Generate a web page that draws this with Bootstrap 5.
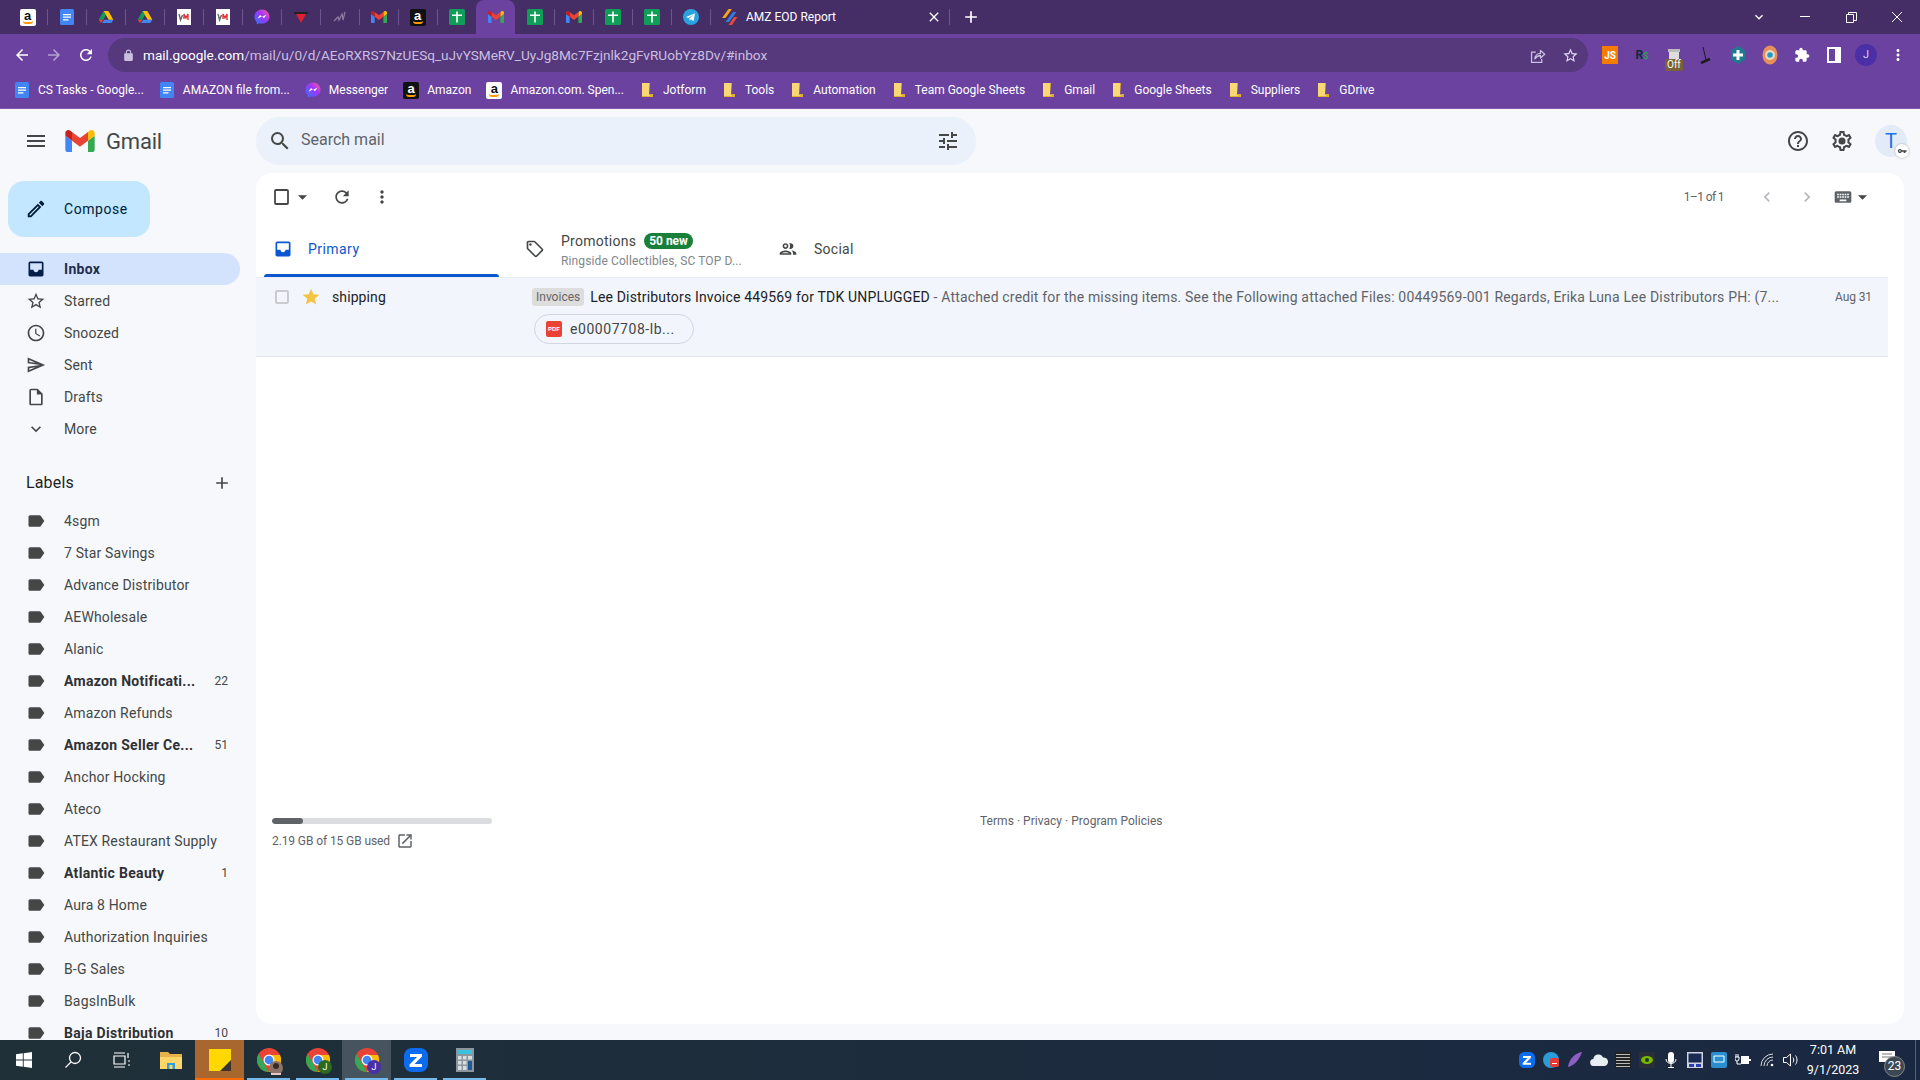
<!DOCTYPE html>
<html lang="en">
<head>
<meta charset="UTF-8">
<title>AMZ EOD Report</title>
<link href="https://cdn.jsdelivr.net/npm/bootstrap@5.3.3/dist/css/bootstrap.min.css" rel="stylesheet">
<style>
html, body { height: 100%; }
body { font-family: Roboto, "Liberation Sans", sans-serif; font-size: 14px; overflow: hidden; background: #f6f8fc; color: #202124; }
svg { display: block; flex-shrink: 0; fill: currentColor; }

/* browser frame */
.tab-strip { height: 34px; background: #452d66; padding-left: 8px; color: #fff; }
.fav-tab { width: 39px; height: 34px; position: relative; }
.fav-tab + .fav-tab::before { content: ""; position: absolute; left: 0; top: 9px; height: 16px; width: 1px; background: #6d5690; }
.fav-tab.is-active { background: #6b429f; border-radius: 8px 8px 0 0; }
.fav-tab.is-active::before, .fav-tab.is-active + .fav-tab::before { display: none; }
.title-tab { width: 240px; height: 34px; padding-left: 12px; font-size: 12px; position: relative; }
.title-tab::before { content: ""; position: absolute; left: 0; top: 9px; height: 16px; width: 1px; background: #6d5690; }
.title-tab::after { content: ""; position: absolute; right: 0; top: 9px; height: 16px; width: 1px; background: #6d5690; }
.title-tab span { margin-left: 8px; }
.new-tab { width: 42px; }
.win-btn { width: 46px; height: 28px; }
.browser-bar { height: 38px; background: #6b429f; color: #fff; padding-top: 4px; padding-left: 6px; }
.nav-btn { width: 32px; }
.omni { width: 1480px; margin-left: 6px; height: 34px; background: #55397c; border-radius: 17px; padding: 0 9px 0 14px; font-size: 13.6px; }
.omni-url { color: #fff; margin-left: 8px; }
.omni-url em { font-style: normal; color: #cbbfe0; }
.ext-slot { width: 32px; }
.ext-js { width: 16px; height: 18px; background: #f57c00; color: #fff; font-size: 10px; font-weight: 700; line-height: 20px; text-align: center; }
.ext-off { position: absolute; left: 7px; bottom: -8px; background: #7a6238; color: #fff; font-size: 10px; line-height: 12px; padding: 0 2px; border-radius: 2px; }
.acct-dot { width: 22px; height: 22px; border-radius: 50%; background: #4a2fa6; color: #d8d0f0; font-size: 11px; line-height: 22px; text-align: center; }
.bookmark-bar { height: 37px; background: #6b429f; padding-left: 14px; gap: 15px; color: #fff; font-size: 12px; border-bottom: 1px solid #7d58ac; }
.bookmark-bar > div { gap: 8px; }
.amazon-a { display: block; width: 16px; height: 17px; border-radius: 2px; font: 700 13px/13px "Liberation Sans", sans-serif; text-align: center; position: relative; }
.amazon-a::after { content: ""; position: absolute; left: 3px; right: 3px; bottom: 2px; height: 3px; border-bottom: 2px solid #f90; border-radius: 0 0 8px 8px; }
.amazon-dark { background: #111; color: #fff; }
.amazon-light { background: #fff; color: #111; }

/* gmail */
.gmail-wrap { min-height: 0; background: #f6f8fc; }
.gmail-side { width: 256px; overflow: hidden; letter-spacing: .15px; }
.gmail-brand { height: 64px; padding-left: 24px; }
.gmail-word { font-size: 22px; color: #444746; margin-left: 11px; letter-spacing: -.2px; }
.compose-btn { width: 142px; height: 56px; margin: 8px 0 16px 8px; background: #c2e7ff; border-radius: 16px; padding-left: 17px; gap: 17px; color: #001d35; font-size: 14px; letter-spacing: .55px; }
.side-row { height: 32px; width: 240px; padding-left: 26px; padding-right: 12px; border-radius: 0 16px 16px 0; color: #444746; }
.side-row svg { margin-right: 18px; }
.side-row.is-current { background: #d3e3fd; color: #1f2d4d; font-weight: 700; letter-spacing: .3px; }
.side-row.is-current svg { color: #041e49; }
.side-row.is-unread { color: #303134; font-weight: 700; letter-spacing: .3px; }
.side-row.is-unread svg { color: #444746; }
.side-count { margin-left: auto; font-size: 12px; font-weight: 400; color: #444746; letter-spacing: 0; }
.labels-head { height: 44px; margin-top: 16px; padding: 0 24px 0 26px; font-size: 16px; color: #1f1f1f; }
.gmail-main { min-width: 0; }
.top-bar { height: 64px; padding-right: 13px; }
.search-box { width: 720px; height: 48px; background: #eaf1fb; border-radius: 24px; padding: 0 16px 0 12px; color: #444746; }
.search-box span { font-size: 16px; margin-left: 9px; color: #5f6368; margin-bottom: 2px; }
.top-btn { width: 44px; color: #444746; }
.avatar-t { width: 32px; height: 32px; margin-left: 11px; border-radius: 50%; background: #e3ebf8; color: #1a73e8; font-size: 20px; line-height: 32px; text-align: center; position: relative; }
.avatar-key { position: absolute; right: -2px; bottom: -1px; width: 14px; height: 14px; border-radius: 50%; background: #fff; color: #444; box-shadow: 0 0 2px #999; padding: 2px; }
.mail-card { height: 851px; width: 1648px; background: #fff; border-radius: 16px; padding-right: 16px; }
.mail-tools { height: 48px; color: #444746; padding-left: 16px; }
.mail-pages { font-size: 12px; color: #5f6368; margin-left: auto; }
.mail-count { letter-spacing: -.6px; }
.tab-row { height: 56px; }
.mail-tab { height: 56px; color: #444746; position: relative; }
.tab-primary { width: 243px; padding-left: 17px; color: #0b57d0; letter-spacing: .45px; }
.tab-primary::after { content: ""; position: absolute; left: 8px; right: 0; bottom: 0; height: 3px; background: #0b57d0; border-radius: 3px 3px 0 0; }
.tab-promo { width: 279px; padding-left: 26px; letter-spacing: .25px; }
.tab-social { padding-left: 0; letter-spacing: .25px; }
.promo-badge { background: #188038; color: #fff; font-size: 12px; font-weight: 700; border-radius: 8px; padding: 0 5px; line-height: 16px; margin-left: 8px; letter-spacing: 0; }
.promo-sub { font-size: 12px; color: #80868b; line-height: 16px; letter-spacing: .12px; margin: 2px 0 -2px; }
.mail-row { height: 80px; background: #f2f6fc; border-top: 1px solid #e9ecf1; border-bottom: 1px solid #e2e6ec; padding: 6px 16px 0 19px; }
.row-check { width: 14px; height: 14px; border: 2px solid #c9cbcf; border-radius: 2px; background: #f2f6fc; margin-top: 6px; }
.row-from { width: 200px; margin-left: 11px; color: #202124; line-height: 20px; margin-top: 3px; letter-spacing: .1px; }
.inv-tag { background: #dddddd; color: #666; font-size: 12px; padding: 0 4px; border-radius: 3px; line-height: 18px; margin-right: 6px; letter-spacing: 0; }
.row-line { height: 26px; white-space: nowrap; overflow: hidden; letter-spacing: .17px; }
.row-subject { color: #202124; }
.row-snip { color: #5f6368; }
.row-date { font-size: 12px; color: #5f6368; margin-left: auto; padding-left: 16px; letter-spacing: -.1px; }
.attach-chip { width: 160px; height: 30px; margin: 4px 0 0 2px; border: 1px solid #cfd6e0; border-radius: 15px; padding-left: 11px; gap: 8px; color: #444746; letter-spacing: .55px; }
.pdf-box { width: 16px; height: 16px; background: #ea4335; color: #fff; font: 700 6px/16px "Liberation Sans", sans-serif; text-align: center; border-radius: 2px; letter-spacing: 0; }
.mail-foot { margin-top: 461px; padding-left: 16px; font-size: 12px; color: #5f6368; }
.quota-wrap { width: 220px; letter-spacing: -.1px; }
.quota-bar { height: 6px; background: #dadce0; border-radius: 3px; overflow: hidden; }
.quota-fill { height: 6px; background: #5f6368; border-radius: 3px; }
.foot-links { margin-left: 488px; margin-top: -6px; letter-spacing: .03px; }

/* taskbar */
.task-bar { height: 40px; background: linear-gradient(to right, #1f3038, #1a2842); color: #fff; }
.task-btn { width: 49px; height: 40px; position: relative; }
.task-btn:first-child { margin-left: -1px; }
.task-btn.is-open::after { content: ""; position: absolute; left: 3px; right: 3px; bottom: 0; height: 2px; background: #76b9ed; }
.task-btn.is-note { background: #a8672f; }
.task-btn.is-note::after { content: ""; position: absolute; left: 0; right: 0; bottom: 0; height: 2px; background: #f76b00; }
.task-btn.is-live { background: #46545f; }
.tray-slot { width: 24px; }
.tray-time { width: 56px; text-align: center; font-size: 12.5px; line-height: 20px; margin-left: 2px; white-space: nowrap; }
.note-wrap { width: 26px; margin-left: 13px; margin-top: -4px; }
.note-badge { position: absolute; left: 10px; bottom: -12px; width: 21px; height: 21px; border-radius: 50%; background: #3b4753; border: 1px solid #888; font-size: 12px; line-height: 19px; text-align: center; }
.task-rule { width: 1px; height: 40px; background: #57636e; margin-left: 15px; margin-right: 4px; }
</style>
</head>
<body class="d-flex flex-column">

<svg width="0" height="0" class="position-absolute">
  <defs>
    <linearGradient id="msgGrad" x1="0" y1="1" x2="1" y2="0"><stop offset="0" stop-color="#2a7bff"/><stop offset=".55" stop-color="#a033ff"/><stop offset="1" stop-color="#ff5c87"/></linearGradient>
    <symbol id="i-gmail" viewBox="52 42 88 66">
      <path fill="#4285f4" d="M58 108h14V74L52 59v43c0 3.32 2.69 6 6 6"/>
      <path fill="#34a853" d="M120 108h14c3.32 0 6-2.69 6-6V59l-20 15"/>
      <path fill="#fbbc04" d="M120 48v26l20-15v-8c0-7.42-8.47-11.65-14.4-7.2"/>
      <path fill="#ea4335" d="M72 74V48l24 18 24-18v26L96 92"/>
      <path fill="#c5221f" d="M52 51v8l20 15V48l-5.6-4.2c-5.94-4.45-14.4-.22-14.4 7.2"/>
    </symbol>
    <symbol id="i-doc" viewBox="0 0 16 16"><rect x="1" width="14" height="16" rx="1.5" fill="#4285f4"/><path fill="#fff" d="M4 5h8v1.2H4zm0 2.6h8v1.2H4zm0 2.6h5.5v1.2H4z"/></symbol>
    <symbol id="i-drive" viewBox="0 0 24 24"><path fill="#0f9d58" d="M1 16 8.500 3l3.500 6-4 7z"/><path fill="#4285f4" d="M6 21l3-5h14l-3 5z"/><path fill="#ffc107" d="M8.500 3h7L23 16h-7z"/><path fill="#ea4335" d="M1 16l3.500 5L8 16z"/></symbol>
    <symbol id="i-wm" viewBox="0 0 16 16"><rect x="1" width="14" height="16" fill="#fff"/><path fill="none" stroke="#666" stroke-width="1.400" d="M3 5l1.600 6L6.500 6"/><path fill="none" stroke="#d33" stroke-width="1.400" d="M8 10V5l2 4 2-4v6"/></symbol>
    <symbol id="i-msg" viewBox="0 0 16 16"><path fill="url(#msgGrad)" d="M8 .5C3.800.5.5 3.600.5 7.700c0 2.100.9 4 2.300 5.200v2.600l2.400-1.300c.9.2 1.800.4 2.800.4 4.200 0 7.500-3.100 7.500-6.900S12.200.5 8 .5z"/><path fill="#fff" d="M3.500 9.800 6 6l2.200 1.800L12.500 5.400 10 9.300 7.800 7.500z"/></symbol>
    <symbol id="i-red" viewBox="0 0 16 16"><path fill="#222" d="M1 3h14v2H1z"/><path fill="#e02030" d="M3 5h10l-5 9z"/></symbol>
    <symbol id="i-dim" viewBox="0 0 16 16"><path fill="none" stroke="#8a7a9c" stroke-width="1.300" d="M2 12 6 8l1 3 3-6 1 6 2-8"/></symbol>
    <symbol id="i-sheet" viewBox="0 0 16 16"><rect x="0" width="16" height="16" rx="1.500" fill="#0f9d58"/><path fill="#fff" d="M7.200 2.500h1.600v3h4.200v1.600H8.800v6.400H7.200V7.100H3V5.500h4.200z"/></symbol>
    <symbol id="i-tele" viewBox="0 0 16 16"><circle cx="8" cy="8" r="8" fill="#29a3e0"/><path fill="#fff" d="M3 8l9-3.800-1.500 8L8 10.300l-1.300 1.500-.3-2.500L11 5.500 5.300 9z"/></symbol>
    <symbol id="i-amz" viewBox="0 0 16 16"><path fill="#f6a21a" d="M6.500 0h3.500L3.500 9H0z"/><path fill="#2f7fe0" d="M11 3h3.500L7 13H3.500z"/><path fill="#e8483a" d="M12 8h3.500L10 16H6.500z"/></symbol>
    <symbol id="i-folder" viewBox="0 0 16 16"><path fill="#f8d775" d="M3 1h7v11l3 3H3z"/><path fill="#e0ae35" d="M10 1h1v11h3v3H3v-1h8z"/></symbol>
    <symbol id="i-share" viewBox="0 0 20 20"><path fill="none" stroke="currentColor" stroke-width="1.500" d="M8 6H3v12h12v-4"/><path fill="none" stroke="currentColor" stroke-width="1.500" stroke-linejoin="round" d="M7 14c0-4 3-6.500 6.500-6.500V4l5 4.500-5 4.500V10c-3 0-5 1.500-6.500 4z"/></symbol>
    <symbol id="i-menu" viewBox="0 0 24 24"><path d="M3 18h18v-2H3v2zm0-5h18v-2H3v2zm0-7v2h18V6H3z"/></symbol>
    <symbol id="i-search" viewBox="0 0 24 24"><path d="M15.500 14h-.79l-.28-.27A6.471 6.471 0 0 0 16 9.500 6.500 6.500 0 1 0 9.500 16c1.610 0 3.090-.59 4.230-1.570l.27.28v.79l5 4.990L20.490 19l-4.990-5zm-6 0C7.010 14 5 11.990 5 9.500S7.010 5 9.500 5 14 7.010 14 9.500 11.990 14 9.500 14z"/></symbol>
    <symbol id="i-tune" viewBox="0 0 24 24"><path d="M3 17v2h6v-2H3zM3 5v2h10V5H3zm10 16v-2h8v-2h-8v-2h-2v6h2zM7 9v2H3v2h4v2h2V9H7zm14 4v-2H11v2h10zm-6-4h2V7h4V5h-4V3h-2v6z"/></symbol>
    <symbol id="i-help" viewBox="0 0 24 24"><path d="M11 18h2v-2h-2v2zm1-16C6.480 2 2 6.480 2 12s4.480 10 10 10 10-4.480 10-10S17.520 2 12 2zm0 18c-4.410 0-8-3.590-8-8s3.590-8 8-8 8 3.590 8 8-3.590 8-8 8zm0-14c-2.210 0-4 1.790-4 4h2c0-1.100.9-2 2-2s2 .9 2 2c0 2-3 1.750-3 5h2c0-2.250 3-2.500 3-5 0-2.210-1.790-4-4-4z"/></symbol>
    <symbol id="i-gear" viewBox="0 0 24 24"><path d="M19.430 12.980c.04-.32.07-.64.07-.98 0-.34-.03-.66-.07-.98l2.110-1.650c.19-.15.24-.42.12-.64l-2-3.460c-.09-.16-.26-.25-.44-.25-.06 0-.12.01-.17.03l-2.490 1c-.52-.4-1.080-.73-1.690-.98l-.38-2.650C14.460 2.180 14.250 2 14 2h-4c-.25 0-.46.18-.49.42l-.38 2.650c-.61.25-1.170.59-1.690.98l-2.490-1c-.06-.02-.12-.03-.18-.03-.17 0-.34.09-.43.25l-2 3.460c-.13.22-.07.49.12.64l2.110 1.650c-.04.32-.07.65-.07.98 0 .33.03.66.07.98l-2.110 1.650c-.19.15-.24.42-.12.64l2 3.460c.09.16.26.25.44.25.06 0 .12-.01.17-.03l2.490-1c.52.4 1.080.73 1.690.98l.38 2.650c.03.24.24.42.49.42h4c.25 0 .46-.18.49-.42l.38-2.650c.61-.25 1.170-.59 1.690-.98l2.490 1c.06.02.12.03.18.03.17 0 .34-.09.43-.25l2-3.460c.12-.22.07-.49-.12-.64l-2.110-1.650zm-1.980-1.710c.04.31.05.52.05.73 0 .21-.02.43-.05.73l-.14 1.130.89.7 1.080.84-.7 1.210-1.270-.51-1.040-.42-.9.68c-.43.32-.84.56-1.250.73l-1.060.43-.16 1.130-.2 1.350h-1.400l-.19-1.350-.16-1.130-1.060-.43c-.43-.18-.83-.41-1.230-.71l-.91-.7-1.060.43-1.270.51-.7-1.210 1.080-.84.89-.7-.14-1.130c-.03-.31-.05-.54-.05-.74s.02-.43.05-.73l.14-1.130-.89-.7-1.080-.84.7-1.210 1.270.51 1.040.42.9-.68c.43-.32.84-.56 1.250-.73l1.060-.43.16-1.130.2-1.350h1.390l.19 1.350.16 1.130 1.060.43c.43.18.83.41 1.230.71l.91.7 1.060-.43 1.270-.51.7 1.210-1.070.85-.89.7.14 1.130z"/><circle cx="12" cy="12" r="3.500"/></symbol>
    <symbol id="i-edit" viewBox="0 0 24 24"><path d="M3 17.250V21h3.750L17.810 9.940l-3.750-3.750L3 17.250zM5.920 19H5v-.92l9.060-9.060.92.92L5.920 19zM20.710 5.630l-2.340-2.340c-.2-.2-.45-.29-.71-.29s-.51.1-.7.29l-1.830 1.830 3.750 3.750 1.830-1.830c.39-.39.39-1.020 0-1.410z"/></symbol>
    <symbol id="i-inbox" viewBox="0 0 24 24"><path fill-rule="evenodd" d="M19 3H5a2 2 0 0 0-2 2v14c0 1.100.9 2 2 2h14c1.100 0 2-.9 2-2V5c0-1.100-.9-2-2-2zM19 13h-4c0 1.660-1.340 3-3 3s-3-1.340-3-3H5V5h14v8z"/></symbol>
    <symbol id="i-star" viewBox="0 0 24 24"><path d="M22 9.240l-7.190-.62L12 2 9.190 8.630 2 9.240l5.460 4.730L5.820 21 12 17.270 18.180 21l-1.630-7.030L22 9.240zM12 15.400l-3.760 2.270 1-4.280-3.320-2.880 4.380-.38L12 6.100l1.710 4.040 4.380.38-3.320 2.880 1 4.280L12 15.400z"/></symbol>
    <symbol id="i-starfill" viewBox="0 0 24 24"><path d="M12 17.270L18.180 21l-1.640-7.030L22 9.240l-7.190-.61L12 2 9.190 8.630 2 9.240l5.460 4.730L5.820 21z"/></symbol>
    <symbol id="i-clock" viewBox="0 0 24 24"><path d="M11.990 2C6.470 2 2 6.480 2 12s4.470 10 9.990 10C17.520 22 22 17.520 22 12S17.520 2 11.990 2zM12 20c-4.420 0-8-3.580-8-8s3.580-8 8-8 8 3.580 8 8-3.580 8-8 8zm.5-13H11v6l5.250 3.150.75-1.230-4.500-2.670z"/></symbol>
    <symbol id="i-send" viewBox="0 0 24 24"><path d="M4.010 6.030l7.510 3.220-7.520-1 .01-2.220m7.500 8.720L4 17.970v-2.220l7.510-1M2.010 3L2 10l15 2-15 2 .01 7L23 12 2.010 3z"/></symbol>
    <symbol id="i-draft" viewBox="0 0 24 24"><path d="M14 2H6c-1.100 0-1.990.9-1.990 2L4 20c0 1.100.89 2 1.990 2H18c1.100 0 2-.9 2-2V8l-6-6zm4 18H6V4h7v5h5v11z"/></symbol>
    <symbol id="i-expand" viewBox="0 0 24 24"><path d="M16.590 8.590L12 13.170 7.410 8.590 6 10l6 6 6-6z"/></symbol>
    <symbol id="i-label" viewBox="0 0 24 24"><path d="M17.630 5.840C17.270 5.330 16.670 5 16 5L5 5.010C3.900 5.010 3 5.900 3 7v10c0 1.100.9 1.990 2 1.990L16 19c.67 0 1.270-.33 1.630-.84L22 12l-4.370-6.160z"/></symbol>
    <symbol id="i-plus" viewBox="0 0 24 24"><path d="M19 13h-6v6h-2v-6H5v-2h6V5h2v6h6v2z"/></symbol>
    <symbol id="i-x" viewBox="0 0 24 24"><path d="M19 6.410 17.590 5 12 10.590 6.410 5 5 6.410 10.590 12 5 17.590 6.410 19 12 13.410 17.590 19 19 17.590 13.410 12z"/></symbol>
    <symbol id="i-refresh" viewBox="0 0 24 24"><path d="M17.650 6.350C16.200 4.900 14.210 4 12 4c-4.420 0-7.990 3.580-7.990 8s3.570 8 7.990 8c3.730 0 6.840-2.550 7.730-6h-2.080c-.82 2.330-3.040 4-5.650 4-3.310 0-6-2.690-6-6s2.690-6 6-6c1.660 0 3.140.69 4.220 1.780L13 11h7V4l-2.350 2.350z"/></symbol>
    <symbol id="i-dots" viewBox="0 0 24 24"><path d="M12 8c1.100 0 2-.9 2-2s-.9-2-2-2-2 .9-2 2 .9 2 2 2zm0 2c-1.100 0-2 .9-2 2s.9 2 2 2 2-.9 2-2-.9-2-2-2zm0 6c-1.100 0-2 .9-2 2s.9 2 2 2 2-.9 2-2-.9-2-2-2z"/></symbol>
    <symbol id="i-left" viewBox="0 0 24 24"><path d="M15.410 7.410L14 6l-6 6 6 6 1.410-1.410L10.830 12z"/></symbol>
    <symbol id="i-right" viewBox="0 0 24 24"><path d="M10 6L8.590 7.410 13.170 12l-4.580 4.590L10 18l6-6z"/></symbol>
    <symbol id="i-keys" viewBox="0 0 24 24"><path d="M20 5H4c-1.100 0-1.990.9-1.990 2L2 17c0 1.100.9 2 2 2h16c1.100 0 2-.9 2-2V7c0-1.100-.9-2-2-2zm-9 3h2v2h-2V8zm0 3h2v2h-2v-2zM8 8h2v2H8V8zm0 3h2v2H8v-2zm-1 2H5v-2h2v2zm0-3H5V8h2v2zm9 7H8v-2h8v2zm0-4h-2v-2h2v2zm0-3h-2V8h2v2zm3 3h-2v-2h2v2zm0-3h-2V8h2v2z"/></symbol>
    <symbol id="i-caret" viewBox="0 0 10 5"><path d="M0 0h10L5 5z"/></symbol>
    <symbol id="i-tag" viewBox="0 0 24 24"><path d="M21.410 11.580l-9-9C12.050 2.220 11.550 2 11 2H4c-1.100 0-2 .9-2 2v7c0 .55.22 1.050.59 1.420l9 9c.36.36.86.58 1.410.58.55 0 1.050-.22 1.410-.59l7-7c.37-.36.59-.86.59-1.410 0-.55-.23-1.060-.59-1.420zM13 20.010L4 11V4h7v-.01l9 9-7 7.020z"/><circle cx="6.500" cy="6.500" r="1.500"/></symbol>
    <symbol id="i-people" viewBox="0 0 24 24"><path d="M9 13.750c-2.340 0-7 1.170-7 3.500V19h14v-1.750c0-2.330-4.660-3.500-7-3.500zM4.340 17c.84-.58 2.870-1.250 4.660-1.250s3.820.67 4.660 1.250H4.340zM9 12c1.930 0 3.500-1.570 3.500-3.500S10.930 5 9 5 5.500 6.570 5.500 8.500 7.070 12 9 12zm0-5c.83 0 1.500.67 1.500 1.500S9.830 10 9 10s-1.500-.67-1.500-1.500S8.170 7 9 7zm7.040 6.810c1.160.84 1.960 1.960 1.960 3.440V19h4v-1.750c0-2.020-3.500-3.170-5.960-3.440zM15 12c1.930 0 3.500-1.570 3.500-3.500S16.930 5 15 5c-.54 0-1.040.13-1.500.35.63.89 1 1.980 1 3.150s-.37 2.260-1 3.150c.46.22.96.35 1.500.35z"/></symbol>
    <symbol id="i-open" viewBox="0 0 24 24"><path d="M19 19H5V5h7V3H5c-1.110 0-2 .9-2 2v14c0 1.100.89 2 2 2h14c1.100 0 2-.9 2-2v-7h-2v7zM14 3v2h3.590l-9.830 9.830 1.410 1.410L19 6.410V10h2V3h-7z"/></symbol>
    <symbol id="i-back" viewBox="0 0 24 24"><path d="M20 11H7.830l5.590-5.590L12 4l-8 8 8 8 1.410-1.410L7.830 13H20v-2z"/></symbol>
    <symbol id="i-fwd" viewBox="0 0 24 24"><path d="M12 4l-1.410 1.410L16.170 11H4v2h12.170l-5.580 5.590L12 20l8-8z"/></symbol>
    <symbol id="i-lock" viewBox="0 0 24 24"><path d="M18 8h-1V6c0-2.760-2.240-5-5-5S7 3.240 7 6v2H6c-1.100 0-2 .9-2 2v10c0 1.100.9 2 2 2h12c1.100 0 2-.9 2-2V10c0-1.100-.9-2-2-2zM9 6c0-1.660 1.340-3 3-3s3 1.340 3 3v2H9V6z"/></symbol>
    <symbol id="i-puzzle" viewBox="0 0 24 24"><path d="M20.500 11H19V7c0-1.100-.9-2-2-2h-4V3.500C13 2.120 11.880 1 10.500 1S8 2.120 8 3.500V5H4c-1.100 0-1.990.9-1.990 2v3.800H3.500c1.490 0 2.700 1.210 2.700 2.700s-1.210 2.700-2.700 2.700H2V20c0 1.100.9 2 2 2h3.800v-1.500c0-1.490 1.210-2.700 2.700-2.700 1.490 0 2.700 1.210 2.700 2.700V22H17c1.100 0 2-.9 2-2v-4h1.500c1.380 0 2.500-1.120 2.500-2.500S21.880 11 20.500 11z"/></symbol>
    <symbol id="i-chrome" viewBox="0 0 24 24"><circle cx="12" cy="12" r="12" fill="#ea4335"/><path fill="#fbbc04" d="M12 7h11a12 12 0 0 1-11 17l5-9z"/><path fill="#34a853" d="M1.600 6 7 15l5 9A12 12 0 0 1 1.600 6z"/><circle cx="12" cy="12" r="5.500" fill="#fff"/><circle cx="12" cy="12" r="4.300" fill="#4285f4"/></symbol>
    <symbol id="i-zoomz" viewBox="0 0 24 24"><rect width="24" height="24" rx="8" fill="#0b6cf0"/><path fill="#fff" d="M6 6h12v2.500L10.500 16H18v3H5.500v-2.500L13 9H6z"/></symbol>
    <symbol id="i-win" viewBox="0 0 16 16"><path fill="#fff" d="M0 2.300 6.800 1.300v6.200H0zM7.700 1.200 16 0v7.500H7.700zM0 8.400h6.800v6.300L0 13.700zM7.700 8.400H16V16l-8.300-1.200z"/></symbol>
  </defs>
</svg>

<!-- tab strip -->
<div class="tab-strip d-flex align-items-center flex-shrink-0">
  <div class="fav-tab d-flex align-items-center justify-content-center"><span class="amazon-a amazon-light">a</span></div>
  <div class="fav-tab d-flex align-items-center justify-content-center"><svg width="16" height="16"><use href="#i-doc"/></svg></div>
  <div class="fav-tab d-flex align-items-center justify-content-center"><svg width="16" height="16"><use href="#i-drive"/></svg></div>
  <div class="fav-tab d-flex align-items-center justify-content-center"><svg width="16" height="16"><use href="#i-drive"/></svg></div>
  <div class="fav-tab d-flex align-items-center justify-content-center"><svg width="16" height="16"><use href="#i-wm"/></svg></div>
  <div class="fav-tab d-flex align-items-center justify-content-center"><svg width="16" height="16"><use href="#i-wm"/></svg></div>
  <div class="fav-tab d-flex align-items-center justify-content-center"><svg width="16" height="16"><use href="#i-msg"/></svg></div>
  <div class="fav-tab d-flex align-items-center justify-content-center"><svg width="16" height="16"><use href="#i-red"/></svg></div>
  <div class="fav-tab d-flex align-items-center justify-content-center"><svg width="16" height="16"><use href="#i-dim"/></svg></div>
  <div class="fav-tab d-flex align-items-center justify-content-center"><svg width="16" height="12"><use href="#i-gmail"/></svg></div>
  <div class="fav-tab d-flex align-items-center justify-content-center"><span class="amazon-a amazon-dark">a</span></div>
  <div class="fav-tab d-flex align-items-center justify-content-center"><svg width="16" height="16"><use href="#i-sheet"/></svg></div>
  <div class="fav-tab is-active d-flex align-items-center justify-content-center"><svg width="16" height="12"><use href="#i-gmail"/></svg></div>
  <div class="fav-tab d-flex align-items-center justify-content-center"><svg width="16" height="16"><use href="#i-sheet"/></svg></div>
  <div class="fav-tab d-flex align-items-center justify-content-center"><svg width="16" height="12"><use href="#i-gmail"/></svg></div>
  <div class="fav-tab d-flex align-items-center justify-content-center"><svg width="16" height="16"><use href="#i-sheet"/></svg></div>
  <div class="fav-tab d-flex align-items-center justify-content-center"><svg width="16" height="16"><use href="#i-sheet"/></svg></div>
  <div class="fav-tab d-flex align-items-center justify-content-center"><svg width="16" height="16"><use href="#i-tele"/></svg></div>
  <div class="title-tab d-flex align-items-center">
    <svg width="16" height="16"><use href="#i-amz"/></svg><span>AMZ EOD Report</span>
    <svg class="ms-auto me-2" width="16" height="16"><use href="#i-x"/></svg>
  </div>
  <div class="new-tab d-flex justify-content-center"><svg width="20" height="20"><use href="#i-plus"/></svg></div>
  <div class="ms-auto d-flex align-items-center">
    <div class="win-btn d-flex align-items-center justify-content-center"><svg width="16" height="16"><use href="#i-expand"/></svg></div>
    <div class="win-btn d-flex align-items-center justify-content-center"><svg width="10" height="2"><rect width="10" height="1" fill="#fff"/></svg></div>
    <div class="win-btn d-flex align-items-center justify-content-center"><svg width="11" height="11" viewBox="0 0 11 11"><path fill="none" stroke="#fff" d="M.5 2.500h7v8h-7zM2.500 2.500v-2h8v8h-3"/></svg></div>
    <div class="win-btn d-flex align-items-center justify-content-center"><svg width="12" height="12" viewBox="0 0 12 12"><path stroke="#fff" d="M1 1l10 10M11 1 1 11"/></svg></div>
  </div>
</div>

<!-- address bar -->
<div class="browser-bar d-flex align-items-center flex-shrink-0">
  <div class="nav-btn d-flex justify-content-center"><svg width="18" height="18"><use href="#i-back"/></svg></div>
  <div class="nav-btn d-flex justify-content-center" style="opacity:.5"><svg width="18" height="18"><use href="#i-fwd"/></svg></div>
  <div class="nav-btn d-flex justify-content-center"><svg width="18" height="18"><use href="#i-refresh"/></svg></div>
  <div class="omni d-flex align-items-center">
    <svg width="13" height="13" style="color:#cbbfe0"><use href="#i-lock"/></svg>
    <span class="omni-url">mail.google.com<em>/mail/u/0/d/AEoRXRS7NzUESq_uJvYSMeRV_UyJg8Mc7Fzjnlk2gFvRUobYz8Dv/#inbox</em></span>
    <svg class="ms-auto" width="17" height="17" style="color:#cbbfe0"><use href="#i-share"/></svg>
    <svg class="ms-3" width="17" height="17" style="color:#e3dcf0"><use href="#i-star"/></svg>
  </div>
  <div class="d-flex align-items-center ms-2" style="margin-left:6px!important">
    <div class="ext-slot d-flex justify-content-center"><div class="ext-js">JS</div></div>
    <div class="ext-slot d-flex justify-content-center"><span style="color:#12283a;font-size:12px;font-weight:700">R<span style="color:#2e9e5b;font-size:9px">$</span></span></div>
    <div class="ext-slot d-flex justify-content-center position-relative"><svg width="14" height="16" viewBox="0 0 14 16"><path fill="#bbb" d="M1 2h12v3H1z"/><path fill="#ddd" d="M2 5h10v9H2z"/></svg><span class="ext-off">Off</span></div>
    <div class="ext-slot d-flex justify-content-center"><svg width="12" height="18" viewBox="0 0 12 18"><path stroke="#1c1c1c" fill="none" d="M3 1l3 13"/><path stroke="#1c1c1c" stroke-width="2.500" d="M1 17l9-4"/></svg></div>
    <div class="ext-slot d-flex justify-content-center"><svg width="16" height="18" viewBox="0 0 16 18"><path fill="#1e7a90" d="M8 0l7 4.500v9L8 18l-7-4.500v-9z"/><path fill="#fff" d="M6.500 4h3v3.500H13v3H9.500V14h-3v-3.500H3v-3h3.500z"/></svg></div>
    <div class="ext-slot d-flex justify-content-center"><svg width="16" height="20" viewBox="0 0 16 20"><ellipse cx="8" cy="10" rx="7.500" ry="9.500" fill="#e8905a"/><circle cx="8" cy="10" r="5" fill="#e6d8c8"/><circle cx="8" cy="10" r="2.800" fill="#1e9bc8"/></svg></div>
    <div class="ext-slot d-flex justify-content-center"><svg width="16" height="18"><use href="#i-puzzle"/></svg></div>
    <div class="ext-slot d-flex justify-content-center"><svg width="14" height="16" viewBox="0 0 14 16"><path fill="#fff" fill-rule="evenodd" d="M0 0h14v16H0zM2 2v12h6V2z"/></svg></div>
    <div class="ext-slot d-flex justify-content-center"><div class="acct-dot">J</div></div>
    <div class="ext-slot d-flex justify-content-center"><svg width="18" height="18"><use href="#i-dots"/></svg></div>
  </div>
</div>

<!-- bookmarks -->
<div class="bookmark-bar d-flex align-items-center flex-shrink-0">
  <div class="d-flex align-items-center"><svg width="16" height="16"><use href="#i-doc"/></svg><span>CS Tasks - Google...</span></div>
  <div class="d-flex align-items-center"><svg width="16" height="16"><use href="#i-doc"/></svg><span>AMAZON file from...</span></div>
  <div class="d-flex align-items-center"><svg width="16" height="16"><use href="#i-msg"/></svg><span>Messenger</span></div>
  <div class="d-flex align-items-center"><span class="amazon-a amazon-dark">a</span><span>Amazon</span></div>
  <div class="d-flex align-items-center"><span class="amazon-a amazon-light">a</span><span>Amazon.com. Spen...</span></div>
  <div class="d-flex align-items-center"><svg width="16" height="16"><use href="#i-folder"/></svg><span>Jotform</span></div>
  <div class="d-flex align-items-center"><svg width="16" height="16"><use href="#i-folder"/></svg><span>Tools</span></div>
  <div class="d-flex align-items-center"><svg width="16" height="16"><use href="#i-folder"/></svg><span>Automation</span></div>
  <div class="d-flex align-items-center"><svg width="16" height="16"><use href="#i-folder"/></svg><span>Team Google Sheets</span></div>
  <div class="d-flex align-items-center"><svg width="16" height="16"><use href="#i-folder"/></svg><span>Gmail</span></div>
  <div class="d-flex align-items-center"><svg width="16" height="16"><use href="#i-folder"/></svg><span>Google Sheets</span></div>
  <div class="d-flex align-items-center"><svg width="16" height="16"><use href="#i-folder"/></svg><span>Suppliers</span></div>
  <div class="d-flex align-items-center"><svg width="16" height="16"><use href="#i-folder"/></svg><span>GDrive</span></div>
</div>

<!-- gmail -->
<div class="gmail-wrap d-flex flex-grow-1">
  <aside class="gmail-side flex-shrink-0">
    <div class="gmail-brand d-flex align-items-center">
      <svg width="24" height="24" style="color:#444746"><use href="#i-menu"/></svg>
      <svg width="30" height="22" style="margin-left:17px"><use href="#i-gmail"/></svg>
      <span class="gmail-word">Gmail</span>
    </div>
    <div class="compose-btn d-flex align-items-center"><svg width="22" height="22" style="color:#001d35"><use href="#i-edit"/></svg><span>Compose</span></div>
    <div class="side-row is-current d-flex align-items-center"><svg width="20" height="20"><use href="#i-inbox"/></svg>Inbox</div>
    <div class="side-row d-flex align-items-center"><svg width="20" height="20"><use href="#i-star"/></svg>Starred</div>
    <div class="side-row d-flex align-items-center"><svg width="20" height="20"><use href="#i-clock"/></svg>Snoozed</div>
    <div class="side-row d-flex align-items-center"><svg width="20" height="20"><use href="#i-send"/></svg>Sent</div>
    <div class="side-row d-flex align-items-center"><svg width="20" height="20"><use href="#i-draft"/></svg>Drafts</div>
    <div class="side-row d-flex align-items-center"><svg width="20" height="20"><use href="#i-expand"/></svg>More</div>
    <div class="labels-head d-flex align-items-center justify-content-between">Labels<svg width="20" height="20" style="color:#444746"><use href="#i-plus"/></svg></div>
    <div class="side-row d-flex align-items-center"><svg width="20" height="20"><use href="#i-label"/></svg>4sgm</div>
    <div class="side-row d-flex align-items-center"><svg width="20" height="20"><use href="#i-label"/></svg>7 Star Savings</div>
    <div class="side-row d-flex align-items-center"><svg width="20" height="20"><use href="#i-label"/></svg>Advance Distributor</div>
    <div class="side-row d-flex align-items-center"><svg width="20" height="20"><use href="#i-label"/></svg>AEWholesale</div>
    <div class="side-row d-flex align-items-center"><svg width="20" height="20"><use href="#i-label"/></svg>Alanic</div>
    <div class="side-row is-unread d-flex align-items-center"><svg width="20" height="20"><use href="#i-label"/></svg>Amazon Notificati...<span class="side-count">22</span></div>
    <div class="side-row d-flex align-items-center"><svg width="20" height="20"><use href="#i-label"/></svg>Amazon Refunds</div>
    <div class="side-row is-unread d-flex align-items-center"><svg width="20" height="20"><use href="#i-label"/></svg>Amazon Seller Ce...<span class="side-count">51</span></div>
    <div class="side-row d-flex align-items-center"><svg width="20" height="20"><use href="#i-label"/></svg>Anchor Hocking</div>
    <div class="side-row d-flex align-items-center"><svg width="20" height="20"><use href="#i-label"/></svg>Ateco</div>
    <div class="side-row d-flex align-items-center"><svg width="20" height="20"><use href="#i-label"/></svg>ATEX Restaurant Supply</div>
    <div class="side-row is-unread d-flex align-items-center"><svg width="20" height="20"><use href="#i-label"/></svg>Atlantic Beauty<span class="side-count">1</span></div>
    <div class="side-row d-flex align-items-center"><svg width="20" height="20"><use href="#i-label"/></svg>Aura 8 Home</div>
    <div class="side-row d-flex align-items-center"><svg width="20" height="20"><use href="#i-label"/></svg>Authorization Inquiries</div>
    <div class="side-row d-flex align-items-center"><svg width="20" height="20"><use href="#i-label"/></svg>B-G Sales</div>
    <div class="side-row d-flex align-items-center"><svg width="20" height="20"><use href="#i-label"/></svg>BagsInBulk</div>
    <div class="side-row is-unread d-flex align-items-center"><svg width="20" height="20"><use href="#i-label"/></svg>Baja Distribution<span class="side-count">10</span></div>
  </aside>

  <main class="gmail-main flex-grow-1">
    <div class="top-bar d-flex align-items-center">
      <div class="search-box d-flex align-items-center">
        <svg width="24" height="24"><use href="#i-search"/></svg>
        <span>Search mail</span>
        <svg class="ms-auto" width="24" height="24"><use href="#i-tune"/></svg>
      </div>
      <div class="ms-auto d-flex align-items-center">
        <div class="top-btn d-flex justify-content-center"><svg width="24" height="24"><use href="#i-help"/></svg></div>
        <div class="top-btn d-flex justify-content-center"><svg width="24" height="24"><use href="#i-gear"/></svg></div>
        <div class="avatar-t">T<span class="avatar-key"><svg width="10" height="10" viewBox="0 0 24 24"><path d="M7 7a5 5 0 1 0 4.600 7H16v3h4v-3h3v-4H11.600A5 5 0 0 0 7 7zm0 3a2 2 0 1 1 0 4 2 2 0 0 1 0-4z"/></svg></span></div>
      </div>
    </div>

    <div class="mail-card">
      <div class="mail-tools d-flex align-items-center">
        <svg width="18" height="18" viewBox="0 0 18 18"><rect x="3" y="2" width="13" height="14" rx="1" fill="none" stroke="#444746" stroke-width="1.800"/></svg>
        <svg class="ms-2" width="9" height="5"><use href="#i-caret"/></svg>
        <svg width="20" height="20" style="margin-left:25px"><use href="#i-refresh"/></svg>
        <svg width="20" height="20" style="margin-left:20px"><use href="#i-dots"/></svg>
        <div class="mail-pages d-flex align-items-center">
          <span class="mail-count">1–1 of 1</span>
          <svg width="20" height="20" style="margin-left:33px;color:#b4b7bb"><use href="#i-left"/></svg>
          <svg width="20" height="20" style="margin-left:20px;color:#b4b7bb"><use href="#i-right"/></svg>
          <svg width="20" height="20" style="margin-left:16px;color:#5f6368"><use href="#i-keys"/></svg>
          <svg width="9" height="5" style="margin-left:5px;margin-right:21px;color:#444746"><use href="#i-caret"/></svg>
        </div>
      </div>

      <div class="tab-row d-flex">
        <div class="mail-tab tab-primary d-flex align-items-center"><svg width="20" height="20"><use href="#i-inbox"/></svg><span style="margin-left:15px">Primary</span></div>
        <div class="mail-tab tab-promo d-flex align-items-center">
          <svg width="20" height="20"><use href="#i-tag"/></svg>
          <div style="margin-left:16px">
            <div class="d-flex align-items-center" style="line-height:20px">Promotions<span class="promo-badge">50 new</span></div>
            <div class="promo-sub">Ringside Collectibles, SC TOP D...</div>
          </div>
        </div>
        <div class="mail-tab tab-social d-flex align-items-center"><svg width="20" height="20"><use href="#i-people"/></svg><span style="margin-left:16px">Social</span></div>
      </div>

      <div class="mail-row">
        <div class="d-flex align-items-start">
          <div class="row-check flex-shrink-0"></div>
          <svg width="20" height="20" style="margin:3px 0 0 12px;color:#f4c542"><use href="#i-starfill"/></svg>
          <div class="row-from flex-shrink-0">shipping</div>
          <div class="flex-grow-1" style="min-width:0">
            <div class="row-line d-flex align-items-center">
              <span class="inv-tag">Invoices</span>
              <span class="row-subject">Lee Distributors Invoice 449569 for TDK UNPLUGGED</span>
              <span class="row-snip">&nbsp;- Attached credit for the missing items. See the Following attached Files: 00449569-001 Regards, Erika Luna Lee Distributors PH: (7...</span>
              <span class="row-date">Aug 31</span>
            </div>
            <div class="attach-chip d-flex align-items-center"><span class="pdf-box">PDF</span><span>e00007708-lb...</span></div>
          </div>
        </div>
      </div>

      <div class="mail-foot d-flex">
        <div class="quota-wrap">
          <div class="quota-bar"><div class="quota-fill" style="width:14%"></div></div>
          <div class="d-flex align-items-center mt-2">2.19 GB of 15 GB used<svg style="margin-left:6px" width="18" height="18"><use href="#i-open"/></svg></div>
        </div>
        <div class="foot-links">Terms · Privacy · Program Policies</div>
      </div>
    </div>
  </main>
</div>

<!-- taskbar -->
<div class="task-bar d-flex align-items-center flex-shrink-0">
  <div class="task-btn d-flex align-items-center justify-content-center"><svg width="16" height="16"><use href="#i-win"/></svg></div>
  <div class="task-btn d-flex align-items-center justify-content-center"><svg width="18" height="18" viewBox="0 0 18 18"><circle cx="11" cy="7" r="5.500" fill="none" stroke="#fff" stroke-width="1.300"/><path stroke="#fff" stroke-width="1.300" d="M7 11l-5.500 5.500"/></svg></div>
  <div class="task-btn d-flex align-items-center justify-content-center"><svg width="18" height="16" viewBox="0 0 18 16"><path fill="none" stroke="#fff" stroke-width="1.200" d="M1 4h11v8H1zM1 1h11M1 15h11M15 1v5M15 9h2M15 13h2"/></svg></div>
  <div class="task-btn d-flex align-items-center justify-content-center"><svg width="22" height="18" viewBox="0 0 22 18"><path fill="#e8b14a" d="M0 1h8l2 2h12v15H0z"/><path fill="#ffd667" d="M0 6h22v12H0z"/><path fill="#2d9fe0" d="M7 12h8v6H7z"/><path fill="#ffd667" d="M9.500 14h3v4h-3z"/></svg></div>
  <div class="task-btn is-note d-flex align-items-center justify-content-center"><svg width="22" height="22" viewBox="0 0 22 22"><path fill="#ffd800" d="M0 0h22v16l-6 6H0z"/><path fill="#3a3430" d="M11 22l11-11v11z"/></svg></div>
  <div class="task-btn is-open d-flex align-items-center justify-content-center position-relative"><svg width="24" height="24"><use href="#i-chrome"/></svg><svg class="position-absolute" style="right:10px;bottom:5px" width="14" height="14" viewBox="0 0 14 14"><circle cx="7" cy="7" r="7" fill="#8d7468"/><circle cx="7" cy="5" r="3" fill="#3a2a24"/><path fill="#e8c8c0" d="M2 12h10v2H2z"/></svg></div>
  <div class="task-btn is-open d-flex align-items-center justify-content-center position-relative"><svg width="24" height="24"><use href="#i-chrome"/></svg><span class="position-absolute text-center" style="right:10px;bottom:6px;width:14px;height:14px;border-radius:50%;background:#2d6a1f;font-size:9px;line-height:14px">J</span></div>
  <div class="task-btn is-open is-live d-flex align-items-center justify-content-center position-relative"><svg width="24" height="24"><use href="#i-chrome"/></svg><span class="position-absolute text-center" style="right:10px;bottom:6px;width:14px;height:14px;border-radius:50%;background:#4a2fa6;font-size:9px;line-height:14px">J</span></div>
  <div class="task-btn is-open d-flex align-items-center justify-content-center"><svg width="24" height="24"><use href="#i-zoomz"/></svg></div>
  <div class="task-btn is-open d-flex align-items-center justify-content-center"><svg width="18" height="24" viewBox="0 0 18 24"><rect width="18" height="24" fill="#8b969e"/><path fill="#3cc2dc" d="M2 2h14v4H2z"/><path fill="#d8dde0" d="M2 8h3.500v3.500H2zm5 0h3.500v3.500H7zm5 0h4v3.500h-4zM2 13h3.500v3.500H2zm5 0h3.500v3.500H7zM2 18h3.500v4H2zm5 0h3.500v4H7z"/><path fill="#1e5b94" d="M12 13h4v9h-4z"/></svg></div>

  <div class="ms-auto d-flex align-items-center">
    <div class="tray-slot d-flex justify-content-center"><svg width="16" height="16"><use href="#i-zoomz"/></svg></div>
    <div class="tray-slot d-flex justify-content-center position-relative"><svg width="16" height="16" viewBox="0 0 16 16"><circle cx="8" cy="8" r="8" fill="#2a9cd8"/><rect x="7" y="6" width="9" height="9" rx="2" fill="#e53935"/><rect x="9" y="11" width="5" height="1" fill="#fff"/></svg></div>
    <div class="tray-slot d-flex justify-content-center"><svg width="16" height="16" viewBox="0 0 16 16"><path fill="#8e5fc2" d="M15 0C8 1 2 7 1 15c5-1 11-6 14-15z"/></svg></div>
    <div class="tray-slot d-flex justify-content-center"><svg width="18" height="12" viewBox="0 0 18 12"><path fill="#e8edf2" d="M4 12a3.500 3.500 0 0 1-.6-7A5 5 0 0 1 13 3.500 4.200 4.200 0 0 1 14.500 12z"/></svg></div>
    <div class="tray-slot d-flex justify-content-center"><svg width="16" height="16" viewBox="0 0 16 16"><rect width="16" height="16" fill="#222"/><path stroke="#bbb" d="M1 2.500h14M1 5.500h14M1 8.500h14M1 11.500h14M1 14.500h14"/></svg></div>
    <div class="tray-slot d-flex justify-content-center"><svg width="16" height="16" viewBox="0 0 16 16"><rect width="16" height="16" fill="#2a2f33"/><ellipse cx="8" cy="8" rx="6" ry="4" fill="#76b900"/><circle cx="8" cy="8" r="2" fill="#2a2f33"/></svg></div>
    <div class="tray-slot d-flex justify-content-center"><svg width="12" height="16" viewBox="0 0 12 16"><rect x="3" width="6" height="11" rx="3" fill="#fff"/><path fill="none" stroke="#fff" d="M1 7c0 6 10 6 10 0M6 12v4M3 15.500h6"/></svg></div>
    <div class="tray-slot d-flex justify-content-center"><svg width="16" height="16" viewBox="0 0 16 16"><rect width="16" height="16" fill="#cfd4e4"/><rect x="1.500" y="1.500" width="13" height="9" fill="#1b2a50"/><path fill="#2a3fb0" d="M2 12h5v3H2zm7 0h5v3H9z"/></svg></div>
    <div class="tray-slot d-flex justify-content-center"><svg width="16" height="16" viewBox="0 0 16 16"><rect width="16" height="16" rx="2" fill="#2a8fd0"/><path fill="none" stroke="#fff" d="M3 4h10v6H3z"/></svg></div>
    <div class="tray-slot d-flex justify-content-center"><svg width="16" height="12" viewBox="0 0 16 12"><path fill="#fff" d="M6 2h8v8H6zM14 5h2v2h-2z"/><path fill="none" stroke="#fff" d="M0 3h4v2a2 2 0 0 1-4 0zM1 0v3M3 0v3M2 7v3h4"/></svg></div>
    <div class="tray-slot d-flex justify-content-center"><svg width="14" height="14" viewBox="0 0 14 14"><path fill="none" stroke="#d8dde0" d="M1 13a12 12 0 0 1 12-12M4 13a9 9 0 0 1 9-9M7 13a6 6 0 0 1 6-6"/><circle cx="12" cy="12" r="1.300" fill="#fff"/></svg></div>
    <div class="tray-slot d-flex justify-content-center"><svg width="16" height="14" viewBox="0 0 16 14"><path fill="none" stroke="#fff" d="M.5 4.500h3L7.500 1v12l-4-3.500h-3zM10 4.500c1 1.500 1 3.500 0 5M12.500 2.500c2 2.500 2 6.500 0 9"/></svg></div>
    <div class="tray-time">7:01 AM<br>9/1/2023</div>
    <div class="note-wrap d-flex justify-content-center position-relative">
      <svg width="16" height="14" viewBox="0 0 16 14"><path fill="#fff" d="M0 0h16v11H0z"/><path stroke="#777" d="M3 3h10M3 6h10"/></svg>
      <span class="note-badge">23</span>
    </div>
    <div class="task-rule"></div>
  </div>
</div>

</body>
</html>
